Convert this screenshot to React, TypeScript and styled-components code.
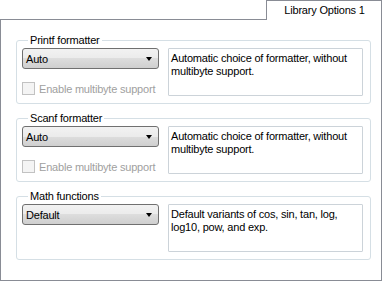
import React from "react";
import styled, { createGlobalStyle } from "styled-components";

const GlobalStyle = createGlobalStyle`
  html, body {
    margin: 0;
    padding: 0;
    background: #ffffff;
  }
  body {
    font-family: "Liberation Sans", Arial, sans-serif;
    font-size: 11px;
    letter-spacing: -0.2px;
    color: #000;
  }
`;

const Window = styled.div`
  width: 383px;
  height: 282px;
  background: #ffffff;
  display: flex;
  flex-direction: column;
`;

const TabStrip = styled.div`
  display: flex;
  justify-content: flex-end;
  height: 19px;
  padding-right: 1px;
`;

const Tab = styled.div`
  flex: 0 0 116px;
  height: 20px;
  box-sizing: border-box;
  border: 1px solid #898c95;
  border-bottom: none;
  background: #ffffff;
  display: flex;
  align-items: center;
  justify-content: center;
  padding: 0 0 1px 1px;
  white-space: nowrap;
  position: relative;
  z-index: 1;
`;

const Panel = styled.div`
  width: 382px;
  height: 262px;
  box-sizing: border-box;
  border: 1px solid #898c95;
  padding: 13px 10px 0 15px;
  display: flex;
  flex-direction: column;
  gap: 7px;
`;

const Group = styled.fieldset`
  margin: 0;
  padding: 1px 7px 7px 5px;
  border: 1px solid #d5dfe5;
  border-radius: 3px;
  display: grid;
  grid-template-columns: 137px 1fr;
  column-gap: 9px;
  min-width: 0;
`;

const Legend = styled.legend`
  margin-left: 6px;
  padding: 0 2px;
  line-height: 14px;
`;

const Column = styled.div`
  display: flex;
  flex-direction: column;
  gap: 13px;
`;

const Select = styled.div`
  height: 21px;
  box-sizing: border-box;
  border: 1px solid #707070;
  border-radius: 3px;
  background: linear-gradient(#f2f2f2 0%, #ebebeb 50%, #dddddd 50%, #cfcfcf 100%);
  display: flex;
  align-items: center;
  padding: 0 5px 0 3px;
`;

const SelectText = styled.span`
  flex: 1;
`;

const Arrow = styled.span`
  width: 0;
  height: 0;
  border-left: 3.5px solid transparent;
  border-right: 3.5px solid transparent;
  border-top: 4px solid #000;
  margin-right: 1px;
`;

const CheckRow = styled.label`
  display: flex;
  align-items: center;
  gap: 4px;
  color: #a0a0a0;
  height: 13px;
  white-space: nowrap;
`;

const Box = styled.span`
  flex: 0 0 13px;
  height: 13px;
  box-sizing: border-box;
  border: 1px solid #c2c2c2;
  background: #f4f4f4;
`;

const Description = styled.div`
  height: 48px;
  box-sizing: border-box;
  border: 1px solid #ccd3d9;
  border-radius: 1px;
  padding: 3px 2px 0 2px;
  line-height: 13px;
`;

type Option = {
  title: string;
  value: string;
  text: string;
  multibyte: boolean;
};

const options: Option[] = [
  {
    title: "Printf formatter",
    value: "Auto",
    text: "Automatic choice of formatter, without multibyte support.",
    multibyte: true,
  },
  {
    title: "Scanf formatter",
    value: "Auto",
    text: "Automatic choice of formatter, without multibyte support.",
    multibyte: true,
  },
  {
    title: "Math functions",
    value: "Default",
    text: "Default variants of cos, sin, tan, log, log10, pow, and exp.",
    multibyte: false,
  },
];

export default function App() {
  return (
    <>
      <GlobalStyle />
      <Window>
        <TabStrip>
          <Tab>Library Options 1</Tab>
        </TabStrip>
        <Panel>
          {options.map((o) => (
            <Group key={o.title}>
              <Legend>{o.title}</Legend>
              <Column>
                <Select>
                  <SelectText>{o.value}</SelectText>
                  <Arrow />
                </Select>
                {o.multibyte && (
                  <CheckRow>
                    <Box />
                    Enable multibyte support
                  </CheckRow>
                )}
              </Column>
              <Description>{o.text}</Description>
            </Group>
          ))}
        </Panel>
      </Window>
    </>
  );
}
